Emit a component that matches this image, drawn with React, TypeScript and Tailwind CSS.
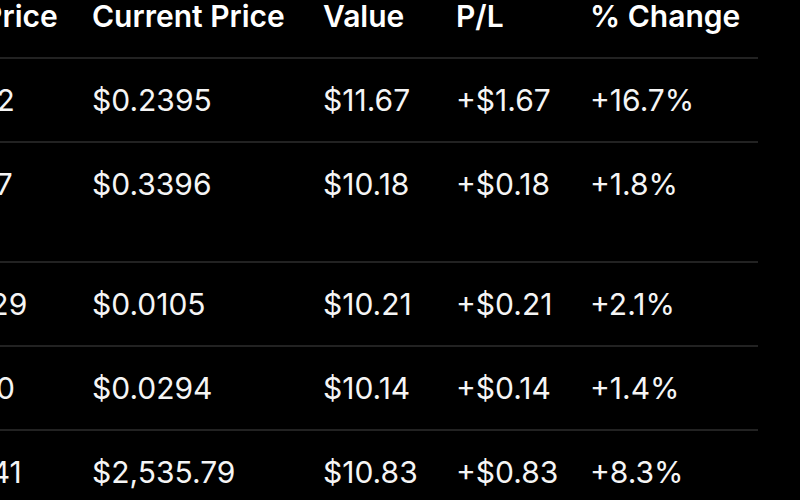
import React from 'react';

interface Holding {
  entry: string;
  current: string;
  value: string;
  pl: string;
  change: string;
  tall?: boolean;
}

const holdings: Holding[] = [
  { entry: '$0.2052', current: '$0.2395', value: '$11.67', pl: '+$1.67', change: '+16.7%' },
  { entry: '$0.3337', current: '$0.3396', value: '$10.18', pl: '+$0.18', change: '+1.8%', tall: true },
  { entry: '$0.01029', current: '$0.0105', value: '$10.21', pl: '+$0.21', change: '+2.1%' },
  { entry: '$0.0290', current: '$0.0294', value: '$10.14', pl: '+$0.14', change: '+1.4%' },
  { entry: '$2341.41', current: '$2,535.79', value: '$10.83', pl: '+$0.83', change: '+8.3%' },
];

const cols = 'grid grid-cols-[197px_231px_133px_134px_168px]';

const App: React.FC = () => {
  return (
    <div
      className="h-[500px] w-[800px] overflow-hidden bg-black text-white"
      style={{ fontFamily: 'Inter, "Noto Sans", sans-serif' }}
    >
      <div className="ml-[-105px] mt-[-26px] w-[863px] text-[30px] leading-9">
        {/* Header */}
        <div className={`${cols} border-b-2 border-[#222222] pt-6 pb-[23px] font-semibold`}>
          <div className="whitespace-nowrap pl-4">Avg. Price</div>
          <div>Current Price</div>
          <div>Value</div>
          <div>P/L</div>
          <div>% Change</div>
        </div>

        {/* Rows */}
        {holdings.map((h) => (
          <div
            key={h.current}
            className={`${cols} border-b-2 border-[#222222] pt-[23px] ${h.tall ? 'pb-[59px]' : 'pb-[23px]'} text-[#f5f5f5]`}
          >
            <div className="whitespace-nowrap">{h.entry}</div>
            <div>{h.current}</div>
            <div>{h.value}</div>
            <div>{h.pl}</div>
            <div>{h.change}</div>
          </div>
        ))}
      </div>
    </div>
  );
};

export default App;
